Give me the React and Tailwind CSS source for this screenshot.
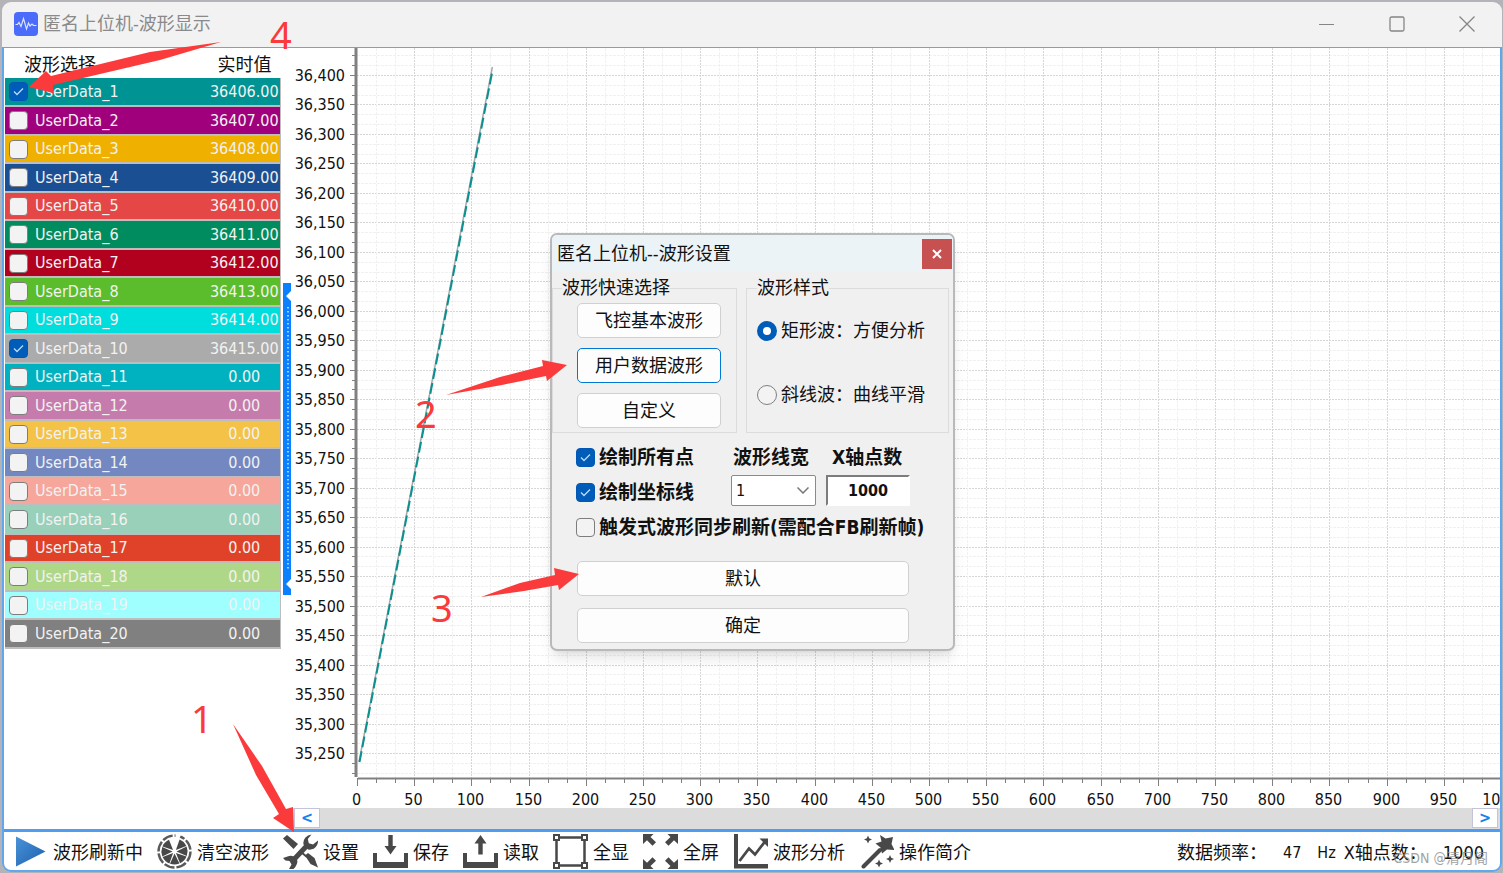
import { useState, useEffect, useRef } from 'react';

const CANALES = [
  { nombre: 'UserData_1', valor: '36406.00', color: 'bg-[#009393]', activo: true },
  { nombre: 'UserData_2', valor: '36407.00', color: 'bg-[#a0007c]' },
  { nombre: 'UserData_3', valor: '36408.00', color: 'bg-[#f0b000]' },
  { nombre: 'UserData_4', valor: '36409.00', color: 'bg-[#1b4f93]' },
  { nombre: 'UserData_5', valor: '36410.00', color: 'bg-[#e54646]' },
  { nombre: 'UserData_6', valor: '36411.00', color: 'bg-[#008c5e]' },
  { nombre: 'UserData_7', valor: '36412.00', color: 'bg-[#b2001f]' },
  { nombre: 'UserData_8', valor: '36413.00', color: 'bg-[#5bbd2b]' },
  { nombre: 'UserData_9', valor: '36414.00', color: 'bg-[#00dddd]' },
  { nombre: 'UserData_10', valor: '36415.00', color: 'bg-[#ababab]', activo: true },
  { nombre: 'UserData_11', valor: '0.00', color: 'bg-[#00b2bf]' },
  { nombre: 'UserData_12', valor: '0.00', color: 'bg-[#c57cac]' },
  { nombre: 'UserData_13', valor: '0.00', color: 'bg-[#f3c246]' },
  { nombre: 'UserData_14', valor: '0.00', color: 'bg-[#7388c1]' },
  { nombre: 'UserData_15', valor: '0.00', color: 'bg-[#f6a69a]' },
  { nombre: 'UserData_16', valor: '0.00', color: 'bg-[#98d0b9]' },
  { nombre: 'UserData_17', valor: '0.00', color: 'bg-[#df4228]' },
  { nombre: 'UserData_18', valor: '0.00', color: 'bg-[#afd788]' },
  { nombre: 'UserData_19', valor: '0.00', color: 'bg-[#9fffff]' },
  { nombre: 'UserData_20', valor: '0.00', color: 'bg-[#808080]' },
];

const CheckBox = ({ id, defaultChecked }) => (
  <span className="relative block size-[19px] shrink-0">
    <input
      id={id}
      type="checkbox"
      defaultChecked={defaultChecked}
      className="peer block size-[19px] appearance-none rounded-[4px] border border-[#7d7d7d] bg-[#f3f3f3] checked:border-[#0058b4] checked:bg-[#005cb9]"
    />
    <svg
      viewBox="0 0 19 19"
      className="pointer-events-none absolute inset-0 hidden peer-checked:block"
      fill="none"
      stroke="#b9dcf7"
      strokeWidth="1.3"
    >
      <path d="M5 9.5l3 3 6-6" />
    </svg>
  </span>
);

const TablaCanales = () => (
  <table className="w-[276px] table-fixed border-collapse">
    <thead>
      <tr className="h-[30px] text-lg leading-6">
        <th className="p-0 pt-1 pl-[19px] text-left font-normal">波形选择</th>
        <th className="w-[72px] p-0 pt-1 font-normal">实时值</th>
      </tr>
    </thead>
    <tbody>
      {CANALES.map((c, i) => (
        <tr
          key={c.nombre}
          className={`border-r border-b-2 border-[#bdbdbd] text-[#f2f2f2] odd:h-7 even:h-[29px] ${c.color}`}
        >
          <td className="p-0">
            <div className="flex items-center gap-[7px] pl-1">
              <CheckBox id={`canal-${i}`} defaultChecked={c.activo} />
              <label htmlFor={`canal-${i}`} className="text-base leading-5">{c.nombre}</label>
            </div>
          </td>
          <td className="p-0 text-center text-base leading-5">{c.valor}</td>
        </tr>
      ))}
    </tbody>
  </table>
);

const Divisor = () => (
  <div className="flex shrink-0 items-center pl-0.5">
    <button aria-label="Ocultar panel" className="block h-[312px] w-2 bg-[#0a80ff]">
      <svg viewBox="0 0 8 312" className="h-[312px] w-2">
        <path d="M8 8v10l-5-5zM8 296v10l-5-5z" fill="#fff" />
        <path d="M5 24v264" stroke="#cfe6ff" strokeWidth="1.5" strokeDasharray="1.5 2.5" />
      </svg>
    </button>
  </div>
);

// origen de los ejes dentro del svg
const X0 = 66;
const Y0 = 705;
const PASO_Y = 9.826;
const FIN_Y = 730;

const Grafica = () => {
  const ref = useRef(null);
  const [ancho, setAncho] = useState(1209);

  useEffect(() => {
    const medir = () => setAncho(ref.current.clientWidth);
    medir();
    window.addEventListener('resize', medir);
    return () => window.removeEventListener('resize', medir);
  }, []);

  const pasoX = ((ancho - 65) / 1000) * (50 / 3);
  const lineasY = Array.from({ length: 74 }, (_, i) => i - 2);
  const lineasX = Array.from({ length: 61 }, (_, i) => i);
  const py = (i) => Math.round(Y0 - i * PASO_Y) + 0.5;
  const px = (i) => Math.round(X0 + i * pasoX) + 0.5;
  const finOnda = X0 + 7.1 * pasoX;

  return (
    <div ref={ref} className="min-w-0 overflow-x-clip">
      <svg className="block h-[760px] w-full overflow-visible" fontSize="16" fill="#111">
        {lineasY.map((i) => (
          <g key={i}>
            <path
              d={`M${X0} ${py(i)}H${ancho}`}
              stroke={i % 3 === 0 ? '#d6d6d6' : '#f1f1f1'}
              strokeDasharray={i % 3 === 0 ? '2 1' : '3 1'}
            />
            <path d={`M${i % 3 === 0 ? 59 : 61} ${py(i)}H64`} stroke="#808080" />
            {i % 3 === 0 && i < 72 && (
              <text x="54" y={py(i) + 5.5} textAnchor="end">
                {(35250 + (i / 3) * 50).toLocaleString('en-US')}
              </text>
            )}
          </g>
        ))}
        {lineasX.map((i) => (
          <g key={i}>
            {i > 0 && (
              <path
                d={`M${px(i)} 0V${FIN_Y}`}
                stroke={i % 3 === 0 ? '#d6d6d6' : '#f1f1f1'}
                strokeDasharray={i % 3 === 0 ? '2 1' : '3 1'}
              />
            )}
            <path d={`M${px(i)} ${FIN_Y}V${i % 3 === 0 ? 738 : 735}`} stroke="#808080" />
            {i % 3 === 0 && (
              <text x={px(i) - 1} y="757" textAnchor="middle">{(i / 3) * 50}</text>
            )}
          </g>
        ))}
        <path d="M65 0V729" stroke="#808080" strokeWidth="3" />
        <path d={`M67 730.5H${ancho}`} stroke="#808080" strokeWidth="2" />
        <path d={`M68 714L${finOnda} 19`} stroke="#a8a8a8" strokeWidth="1.5" />
        <path d={`M68.5 714L${finOnda} 23`} stroke="#0a9090" strokeWidth="2" strokeDasharray="11 4" />
      </svg>
    </div>
  );
};

const BarraScroll = () => (
  <div className="flex h-[21px] justify-between bg-[#dcdcdc] pr-0.5 pl-[3px]">
    <button className="h-5 w-[26px] border border-[#c4c4d8] bg-white font-bold leading-4 text-[#1583ee]">
      &lt;
    </button>
    <button className="h-5 w-[26px] border border-[#c4c4d8] bg-white font-bold leading-4 text-[#1583ee]">
      &gt;
    </button>
  </div>
);

const Icono = ({ children }) => (
  <svg viewBox="0 0 35 35" className="size-[35px] shrink-0" fill="#484848">
    {children}
  </svg>
);

const bandeja = <path d="M0 19h4v9h27v-9h4v15H0z" />;
const flecha = <path d="M0 0h10.500l-3 3 5.500 5.200-3.500 3.500-5.500-5.400L0 10z" />;
const estrella = 'l1.2 2.800 2.800 1.200-2.800 1.200-1.200 2.800-1.200-2.800-2.800-1.200 2.800-1.200z';

const HERRAMIENTAS = [
  {
    texto: '波形刷新中',
    icono: (
      <>
        <defs>
          <linearGradient id="azul" x1="0" y1="0" x2="1" y2="1">
            <stop offset="0" stopColor="#4b93d8" />
            <stop offset="1" stopColor="#1a5fae" />
          </linearGradient>
        </defs>
        <path d="M3 2.5L32.500 17.500 3 32.500z" fill="url(#azul)" />
      </>
    ),
  },
  {
    texto: '清空波形',
    icono: (
      <>
        <circle cx="17.500" cy="17.500" r="16" fill="none" stroke="#5a5a5a" strokeWidth="2.400" strokeDasharray="10.500 2" />
        {[22, 67, 112, 157, 202, 247, 292].map((a) => (
          <path key={a} d="M17.500 15.500L12.800 5.300a13 13 0 0 1 9.400 0z" transform={`rotate(${a + 22} 17.500 17.500)`} />
        ))}
        <path d="M18.500 0h6l-2 4h-4z" fill="#fff" />
      </>
    ),
  },
  {
    texto: '设置',
    icono: (
      <>
        <path d="M0 4.500L4 1l11 9-4.500 5z" />
        <path d="M22 21.500l3-2.500 6.500 5 3.500 9.500-7.500-3.500z" />
        <path d="M18 18l6 5" stroke="#484848" strokeWidth="2" />
        <path d="M9.500 27L25 10.500" stroke="#484848" strokeWidth="5" />
        <path d="M28.500 0.500a8.500 8.500 0 0 0-8 10l4.500 5a8.500 8.500 0 0 0 10-9l-5 4-4.200-1.200-1-4.300z" />
        <path d="M0 24l4.500-1.500a8.500 8.500 0 0 1 9.500 2.500q1.500 5-3.500 10l-4.500 0 2.500-4.500-2-3.500-4-.5z" />
      </>
    ),
  },
  {
    texto: '保存',
    icono: (
      <>
        {bandeja}
        <path d="M15.300 1h4.400v11h3.800l-6 8.500-6-8.500h3.800z" />
      </>
    ),
  },
  {
    texto: '读取',
    icono: (
      <>
        {bandeja}
        <path d="M15.300 20.500h4.400v-11h3.800l-6-8.500-6 8.500h3.800z" />
      </>
    ),
  },
  {
    texto: '全显',
    icono: (
      <g fill="#fff" stroke="#484848" strokeWidth="2">
        <path d="M3.500 3.500h28v28h-28z" strokeWidth="2.500" />
        <path d="M1 1h5v5H1zM29 1h5v5h-5zM1 29h5v5H1zM29 29h5v5h-5z" />
      </g>
    ),
  },
  {
    texto: '全屏',
    icono: (
      <>
        <g>{flecha}</g>
        <g transform="translate(35 0) scale(-1 1)">{flecha}</g>
        <g transform="translate(0 35) scale(1 -1)">{flecha}</g>
        <g transform="translate(35 35) scale(-1 -1)">{flecha}</g>
      </>
    ),
  },
  {
    texto: '波形分析',
    icono: (
      <>
        <path d="M1 0h4v30h30v4.500H1z" />
        <path d="M6.500 27l9.500-12.500 6 6 10-13" fill="none" stroke="#484848" strokeWidth="2.800" />
        <path d="M26.500 4.500H35v8.500z" />
      </>
    ),
  },
  {
    texto: '操作简介',
    icono: (
      <>
        <path d="M4.500 32.500L21 16" stroke="#484848" strokeWidth="4" strokeLinecap="round" />
        <path d="M21 1l5.500 3.500L34 3l-1.500 7 3 6-7.500-.5-5 4-1.500-6-5-4 6-2z" />
        <path d={`M9 1.500${estrella}M20 25.500${estrella}M31 21${estrella}`} />
      </>
    ),
  },
];

const BarraHerramientas = () => (
  <footer className="relative flex h-[38px] items-center justify-between pr-4 pl-[9px] text-lg">
    <div className="flex items-center gap-[14px]">
      {HERRAMIENTAS.map((h) => (
        <button key={h.texto} className="flex items-center gap-[5px] whitespace-nowrap leading-6">
          <Icono>{h.icono}</Icono>
          <span className="pt-1">{h.texto}</span>
        </button>
      ))}
    </div>
    <div className="flex items-center gap-2 pt-1 whitespace-nowrap leading-6">
      <span>数据频率：</span>
      <span className="px-2 text-base">47</span>
      <span className="text-base">Hz</span>
      <span>X轴点数：</span>
      <span className="pl-2">1000</span>
    </div>
    <span className="absolute right-3 bottom-0.5 text-sm text-[#8c8c8c] opacity-80">CSDN @清月阁</span>
  </footer>
);

const Boton = ({ children, activo }) => (
  <button
    className={`h-[35px] w-full rounded-[5px] border bg-[#fdfdfd] text-lg leading-6 ${
      activo ? 'border-[#0078d4]' : 'border-[#d0d0d0]'
    }`}
  >
    {children}
  </button>
);

const Radio = ({ children, defaultChecked }) => (
  <label className="flex items-center gap-1 whitespace-nowrap text-lg leading-6">
    <input
      type="radio"
      name="estilo"
      defaultChecked={defaultChecked}
      className="size-5 shrink-0 appearance-none rounded-full border border-[#808080] bg-[#f3f3f3] checked:border-[6px] checked:border-[#005cb9] checked:bg-white"
    />
    {children}
  </label>
);

const DialogoAjustes = () => (
  <section
    role="dialog"
    aria-label="匿名上位机--波形设置"
    className="absolute top-[233px] left-[550px] w-[405px] rounded-[7px] border-2 border-[#b7b9ba] bg-[#f0f0f0] pb-[6px] shadow-lg"
  >
    <header className="flex h-[37px] items-center justify-between rounded-t-[5px] bg-[#ebf3f7] pr-px pl-[5px]">
      <h2 className="text-lg leading-6">匿名上位机--波形设置</h2>
      <button aria-label="关闭" className="flex h-[30px] w-[30px] items-center justify-center bg-[#c75050]">
        <svg viewBox="0 0 10 10" className="size-[10px]" stroke="#fff" strokeWidth="2">
          <path d="M1 1l8 8M9 1l-8 8" />
        </svg>
      </button>
    </header>

    <div className="flex items-stretch gap-[9px] pt-1 pr-1">
      <fieldset className="w-[185px] border border-[#dcdcdc] px-[9px] pb-1">
        <legend className="text-lg leading-6">波形快速选择</legend>
        <div className="flex flex-col gap-[10px] pt-[3px] pr-[6px] pl-[15px]">
          <Boton>飞控基本波形</Boton>
          <Boton activo>用户数据波形</Boton>
          <Boton>自定义</Boton>
        </div>
      </fieldset>
      <fieldset className="flex-1 border border-[#dcdcdc] px-[10px]">
        <legend className="text-lg leading-6">波形样式</legend>
        <div className="flex flex-col gap-10 pt-[19px]">
          <Radio defaultChecked>矩形波：方便分析</Radio>
          <Radio>斜线波：曲线平滑</Radio>
        </div>
      </fieldset>
    </div>

    <div className="flex pt-3 pl-6 text-[19px] leading-6 font-bold">
      <div className="flex w-[155px] flex-col gap-[11px]">
        <div className="flex h-6 items-center gap-1">
          <CheckBox id="puntos" defaultChecked />
          <label htmlFor="puntos" className="whitespace-nowrap">绘制所有点</label>
        </div>
        <div className="flex h-6 items-center gap-1">
          <CheckBox id="ejes" defaultChecked />
          <label htmlFor="ejes" className="whitespace-nowrap">绘制坐标线</label>
        </div>
        <div className="flex h-6 items-center gap-1">
          <CheckBox id="disparo" />
          <label htmlFor="disparo" className="whitespace-nowrap">触发式波形同步刷新(需配合FB刷新帧)</label>
        </div>
      </div>
      <div className="flex w-[95px] flex-col gap-[6px]">
        <label htmlFor="grosor" className="pl-0.5">波形线宽</label>
        <div className="relative w-[85px]">
          <select
            id="grosor"
            defaultValue="1"
            className="h-[31px] w-full appearance-none rounded-[2px] border border-[#8a8a8a] bg-white pl-1 text-base font-normal"
          >
            <option>1</option>
            <option>2</option>
            <option>3</option>
          </select>
          <svg viewBox="0 0 12 7" className="pointer-events-none absolute top-3 right-[7px] h-[7px] w-3" fill="none" stroke="#777" strokeWidth="1.5">
            <path d="M0.5 0.5L6 6l5.500-5.500" />
          </svg>
        </div>
      </div>
      <div className="flex w-[84px] flex-col gap-[6px]">
        <label htmlFor="total" className="pl-[6px] whitespace-nowrap">X轴点数</label>
        <input
          id="total"
          defaultValue="1000"
          className="h-[31px] w-full border-2 border-t-[#7c7c7c] border-r-white border-b-white border-l-[#7c7c7c] bg-white text-center text-base"
        />
      </div>
    </div>

    <div className="flex flex-col gap-3 pt-[22px] pr-[44px] pl-[25px]">
      <Boton>默认</Boton>
      <Boton>确定</Boton>
    </div>
  </section>
);

// flechas y números rojos sobre la ventana
const Anotaciones = () => (
  <svg className="pointer-events-none absolute inset-0 size-full" fill="#fb3b3b" fontSize="38">
    <g className="font-['Noto_Sans',sans-serif]">
      <text x="191" y="733">1</text>
      <text x="415" y="428">2</text>
      <text x="431" y="622">3</text>
      <text x="270" y="49">4</text>
    </g>
    <path d="M233 724L262 766 286 809 293 807 294 832 273 818 279 814 256 775z" />
    <path d="M446 395L500 377 543 366 542 360 567 365 547 381 546 376 502 385z" />
    <path d="M481 597L520 583 555 575 554 568 579 574 559 590 558 585 524 591z" />
    <path d="M221 42L150 52 51 76 46 71 29 87 53 93 53 85 160 60z" />
  </svg>
);

export default function App() {
  return (
    <div className="relative flex min-h-screen flex-col overflow-hidden bg-[#b3b3b8] pt-0.5 pr-px pb-px pl-0.5 font-['DejaVu_Sans_Condensed','Noto_Sans_CJK_SC',sans-serif] text-[#111]">
      <div className="flex flex-1 flex-col overflow-hidden rounded-[9px]">
        <header className="flex h-[45px] items-center justify-between bg-[#f2f2f2] pr-[27px] pb-0.5 pl-3">
          <div className="flex items-center gap-[5px]">
            <svg viewBox="0 0 24 24" className="size-6">
              <rect width="24" height="24" rx="4" fill="#4b6bfb" />
              <path
                d="M1.5 12.500h2l1.500-2 2 4 2.500-8 3 10.500 2-6 1.500 3 2-2 1.500 1.500h3"
                fill="none"
                stroke="#dbe3ff"
                strokeWidth="1.2"
              />
            </svg>
            <h1 className="text-lg leading-6 text-[#8a8a8a]">匿名上位机-波形显示</h1>
          </div>
          <div className="flex items-center gap-[54px] text-[#858585]">
            <button aria-label="最小化">
              <svg viewBox="0 0 16 16" className="size-4" stroke="currentColor"><path d="M0 8.500h15" /></svg>
            </button>
            <button aria-label="最大化">
              <svg viewBox="0 0 16 16" className="size-4" fill="none" stroke="currentColor" strokeWidth="1.3">
                <rect x="1" y="1" width="14" height="14" rx="1.5" />
              </svg>
            </button>
            <button aria-label="关闭">
              <svg viewBox="0 0 16 16" className="size-4" stroke="currentColor" strokeWidth="1.3">
                <path d="M0.5 0.5l15 15M15.500 0.5l-15 15" />
              </svg>
            </button>
          </div>
        </header>

        <div className="flex flex-1 flex-col rounded-b-[9px] border-2 border-t border-[#62a6ee] bg-white">
          <main className="flex flex-1">
            <div className="shrink-0 pl-px">
              <TablaCanales />
            </div>
            <Divisor />
            <div className="flex min-w-0 flex-1 flex-col">
              <Grafica />
              <BarraScroll />
            </div>
          </main>
          <div className="h-[3px] bg-[#4f9cf0]" />
          <BarraHerramientas />
        </div>
      </div>

      <DialogoAjustes />
      <Anotaciones />
    </div>
  );
}
